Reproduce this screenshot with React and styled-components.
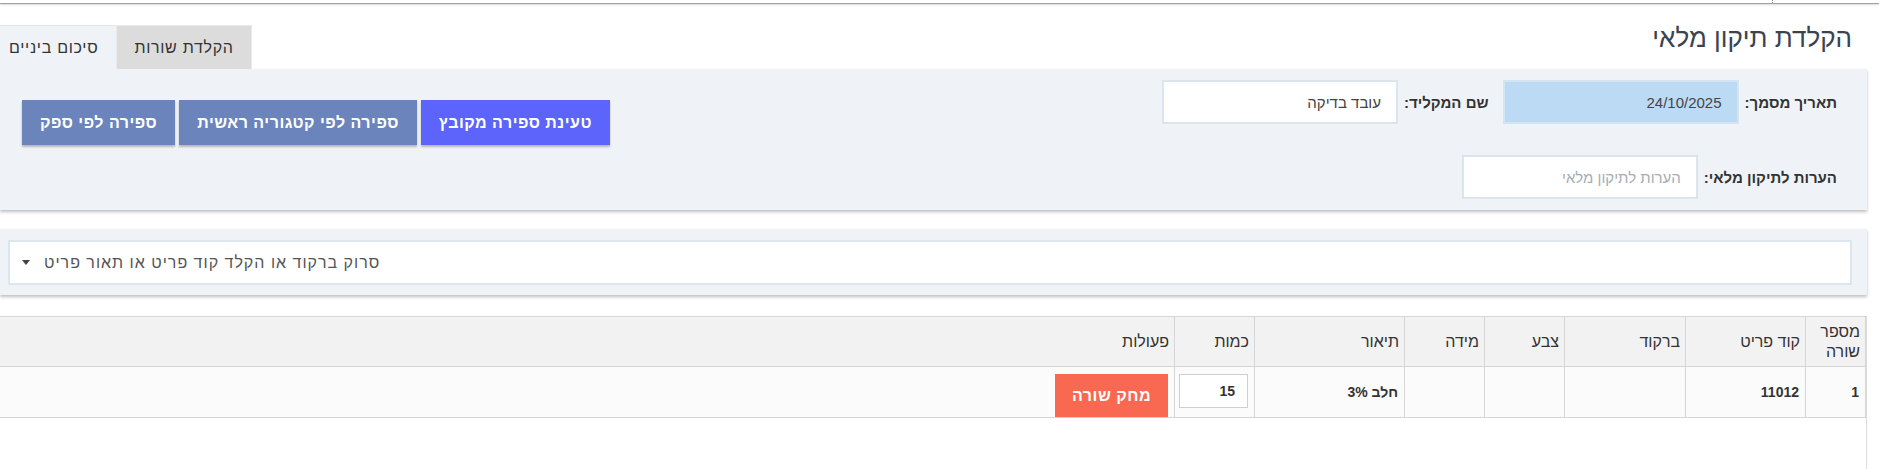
import React from "react";
import styled, { createGlobalStyle } from "styled-components";

const columns = [
  { key: "line", title: "מספר שורה", width: 60 },
  { key: "code", title: "קוד פריט", width: 120 },
  { key: "barcode", title: "ברקוד", width: 121 },
  { key: "color", title: "צבע", width: 80 },
  { key: "size", title: "מידה", width: 80 },
  { key: "desc", title: "תיאור", width: 150 },
  { key: "qty", title: "כמות", width: 80 },
  { key: "actions", title: "פעולות" },
];

const rows = [{ line: 1, code: "11012", barcode: "", color: "", size: "", desc: "חלב 3%", qty: 15 }];

const App = () => {
  return (
    <>
      <GlobalStyle />
      <TopBar>
        <Tick />
      </TopBar>
      <Page>
        <Header>
          <Title>הקלדת תיקון מלאי</Title>
          <Tabs>
            <Tab $active>הקלדת שורות</Tab>
            <Tab>סיכום ביניים</Tab>
          </Tabs>
        </Header>

        <Panel>
          <Form>
            <FormRow>
              <Field>
                <Label>תאריך מסמך:</Label>
                <Input $bg="#bddaf5" $border="#d3e4f3" defaultValue="24/10/2025" />
              </Field>
              <Field>
                <Label>שם המקליד:</Label>
                <Input defaultValue="עובד בדיקה" />
              </Field>
            </FormRow>
            <FormRow>
              <Field>
                <Label>הערות לתיקון מלאי:</Label>
                <Input placeholder="הערות לתיקון מלאי" />
              </Field>
            </FormRow>
          </Form>
          <Buttons>
            <ActionButton $bg="#5c64fb">טעינת ספירה מקובץ</ActionButton>
            <ActionButton>ספירה לפי קטגוריה ראשית</ActionButton>
            <ActionButton>ספירה לפי ספק</ActionButton>
          </Buttons>
        </Panel>

        <SearchPanel>
          <Select>
            <SelectText>סרוק ברקוד או הקלד קוד פריט או תאור פריט</SelectText>
            <svg width="8" height="5" viewBox="0 0 8 5">
              <path d="M0 0 L8 0 L4 5 Z" fill="#444" />
            </svg>
          </Select>
        </SearchPanel>

        <TableWrap>
          <Table>
            <colgroup>
              {columns.map((c) => (
                <col key={c.key} style={c.width ? { width: c.width } : undefined} />
              ))}
            </colgroup>
            <thead>
              <tr>
                {columns.map((c) => (
                  <Th key={c.key}>{c.title}</Th>
                ))}
              </tr>
            </thead>
            <tbody>
              {rows.map((r) => (
                <tr key={r.line}>
                  <Td>{r.line}</Td>
                  <Td>{r.code}</Td>
                  <Td>{r.barcode}</Td>
                  <Td>{r.color}</Td>
                  <Td>{r.size}</Td>
                  <Td>{r.desc}</Td>
                  <Td>
                    <QtyInput defaultValue={r.qty} />
                  </Td>
                  <ActionCell>
                    <DeleteButton>מחק שורה</DeleteButton>
                  </ActionCell>
                </tr>
              ))}
            </tbody>
          </Table>
        </TableWrap>
      </Page>
    </>
  );
};

// Styled Components
const GlobalStyle = createGlobalStyle`
  body {
    margin: 0;
    direction: rtl;
    background: #fff;
    font-family: "Liberation Sans", Arial, sans-serif;
    color: #333;
    overflow: hidden;
  }
`;

const TopBar = styled.div`
  height: 3px;
  border-bottom: 1px solid #a3a3a3;
  box-shadow: 0 1px 2px rgba(0, 0, 0, 0.15);
  display: flex;
`;

const Tick = styled.div`
  margin-right: 106px;
  height: 3px;
  border-left: 1px dotted #999;
`;

const Page = styled.div`
  margin-right: 12px;
`;

const Header = styled.div`
  height: 65px;
  display: flex;
  justify-content: space-between;
  align-items: flex-end;
`;

const Title = styled.h1`
  align-self: flex-start;
  margin: 19px 15px 0 0;
  font-size: 26px;
  line-height: 30px;
  font-weight: 400;
  color: #3c4350;
`;

const Tabs = styled.div`
  display: flex;
  margin-left: -9px;
`;

const Tab = styled.div`
  height: 44px;
  box-sizing: border-box;
  padding: 0 17px;
  display: flex;
  align-items: center;
  font-size: 16px;
  letter-spacing: 0.7px;
  color: #333;
  background: ${(p) => (p.$active ? "#dcdcdc" : "#eff3f7")};
  border: 1px solid ${(p) => (p.$active ? "#e9e9e9" : "transparent")};
  border-top-color: ${(p) => (p.$active ? "#e9e9e9" : "#e3e8ee")};
  border-bottom: none;
`;

const Panel = styled.div`
  height: 141px;
  box-sizing: border-box;
  padding: 11px 30px 0 22px;
  display: flex;
  justify-content: space-between;
  align-items: flex-start;
  background: #eff3f7;
  box-shadow: 0 2px 3px rgba(0, 0, 0, 0.25);
`;

const Form = styled.div`
  display: flex;
  flex-direction: column;
  gap: 31px;
`;

const FormRow = styled.div`
  display: flex;
  align-items: center;
  gap: 14px;
`;

const Field = styled.div`
  display: flex;
  align-items: center;
  gap: 6px;
`;

const Label = styled.label`
  font-size: 15px;
  font-weight: 700;
  color: #333;
  white-space: nowrap;
`;

const Input = styled.input`
  width: 236px;
  height: 44px;
  box-sizing: border-box;
  padding: 0 15px;
  border: 2px solid ${(p) => p.$border || "#dce5ee"};
  background: ${(p) => p.$bg || "#fff"};
  font-family: inherit;
  font-size: 15px;
  color: #444;
  direction: rtl;
  outline: none;

  &::placeholder {
    color: #a6adb5;
  }
`;

const Buttons = styled.div`
  display: flex;
  gap: 4px;
  margin-top: 20px;
`;

const ActionButton = styled.button`
  height: 45px;
  padding: 0 18px;
  border: none;
  background: ${(p) => p.$bg || "#6b84bb"};
  color: #fff;
  font-family: inherit;
  font-size: 16px;
  font-weight: 700;
  letter-spacing: 0.5px;
  box-shadow: 0 2px 2px rgba(0, 0, 0, 0.25);
  cursor: pointer;
`;

const SearchPanel = styled.div`
  margin-top: 19px;
  height: 66px;
  box-sizing: border-box;
  padding: 11px 15px 0 8px;
  background: #eff3f7;
  box-shadow: 0 2px 3px rgba(0, 0, 0, 0.25);
`;

const Select = styled.div`
  height: 45px;
  box-sizing: border-box;
  border: 2px solid #dce6ef;
  background: #fff;
  display: flex;
  align-items: center;
  justify-content: flex-end;
  gap: 14px;
  padding-left: 12px;
`;

const SelectText = styled.span`
  font-size: 16px;
  color: #555;
  letter-spacing: 1px;
`;

const TableWrap = styled.div`
  margin-top: 21px;
  min-height: 160px;
  border-right: 1px solid #dcdcdc;
`;

const Table = styled.table`
  width: 100%;
  border-collapse: collapse;
  table-layout: fixed;
`;

const Th = styled.th`
  height: 49px;
  padding: 0 5px;
  background: #f2f2f2;
  border: 1px solid #d6d6d6;
  border-left: none;
  font-size: 16px;
  font-weight: 400;
  line-height: 20px;
  color: #333;
  text-align: right;
  vertical-align: middle;
`;

const Td = styled.td`
  height: 50px;
  box-sizing: border-box;
  padding: 0 6px;
  background: #fbfbfb;
  border: 1px solid #d6d6d6;
  border-left: none;
  font-size: 14px;
  font-weight: 700;
  color: #333;
  text-align: right;
  vertical-align: middle;
`;

const ActionCell = styled(Td)`
  padding: 7px 6px 0;
  vertical-align: top;
`;

const QtyInput = styled.input`
  width: 69px;
  height: 34px;
  box-sizing: border-box;
  padding: 0 12px 0 4px;
  border: 1px solid #cfcfcf;
  background: #fff;
  font-family: inherit;
  font-size: 14px;
  font-weight: 700;
  color: #333;
  text-align: right;
  display: block;
  margin-top: -3px;
`;

const DeleteButton = styled.button`
  height: 43px;
  padding: 0 17px;
  border: none;
  background: #f96850;
  color: #fff;
  font-family: inherit;
  font-size: 16px;
  font-weight: 700;
  letter-spacing: 0.5px;
  display: block;
  cursor: pointer;
`;

export default App;
